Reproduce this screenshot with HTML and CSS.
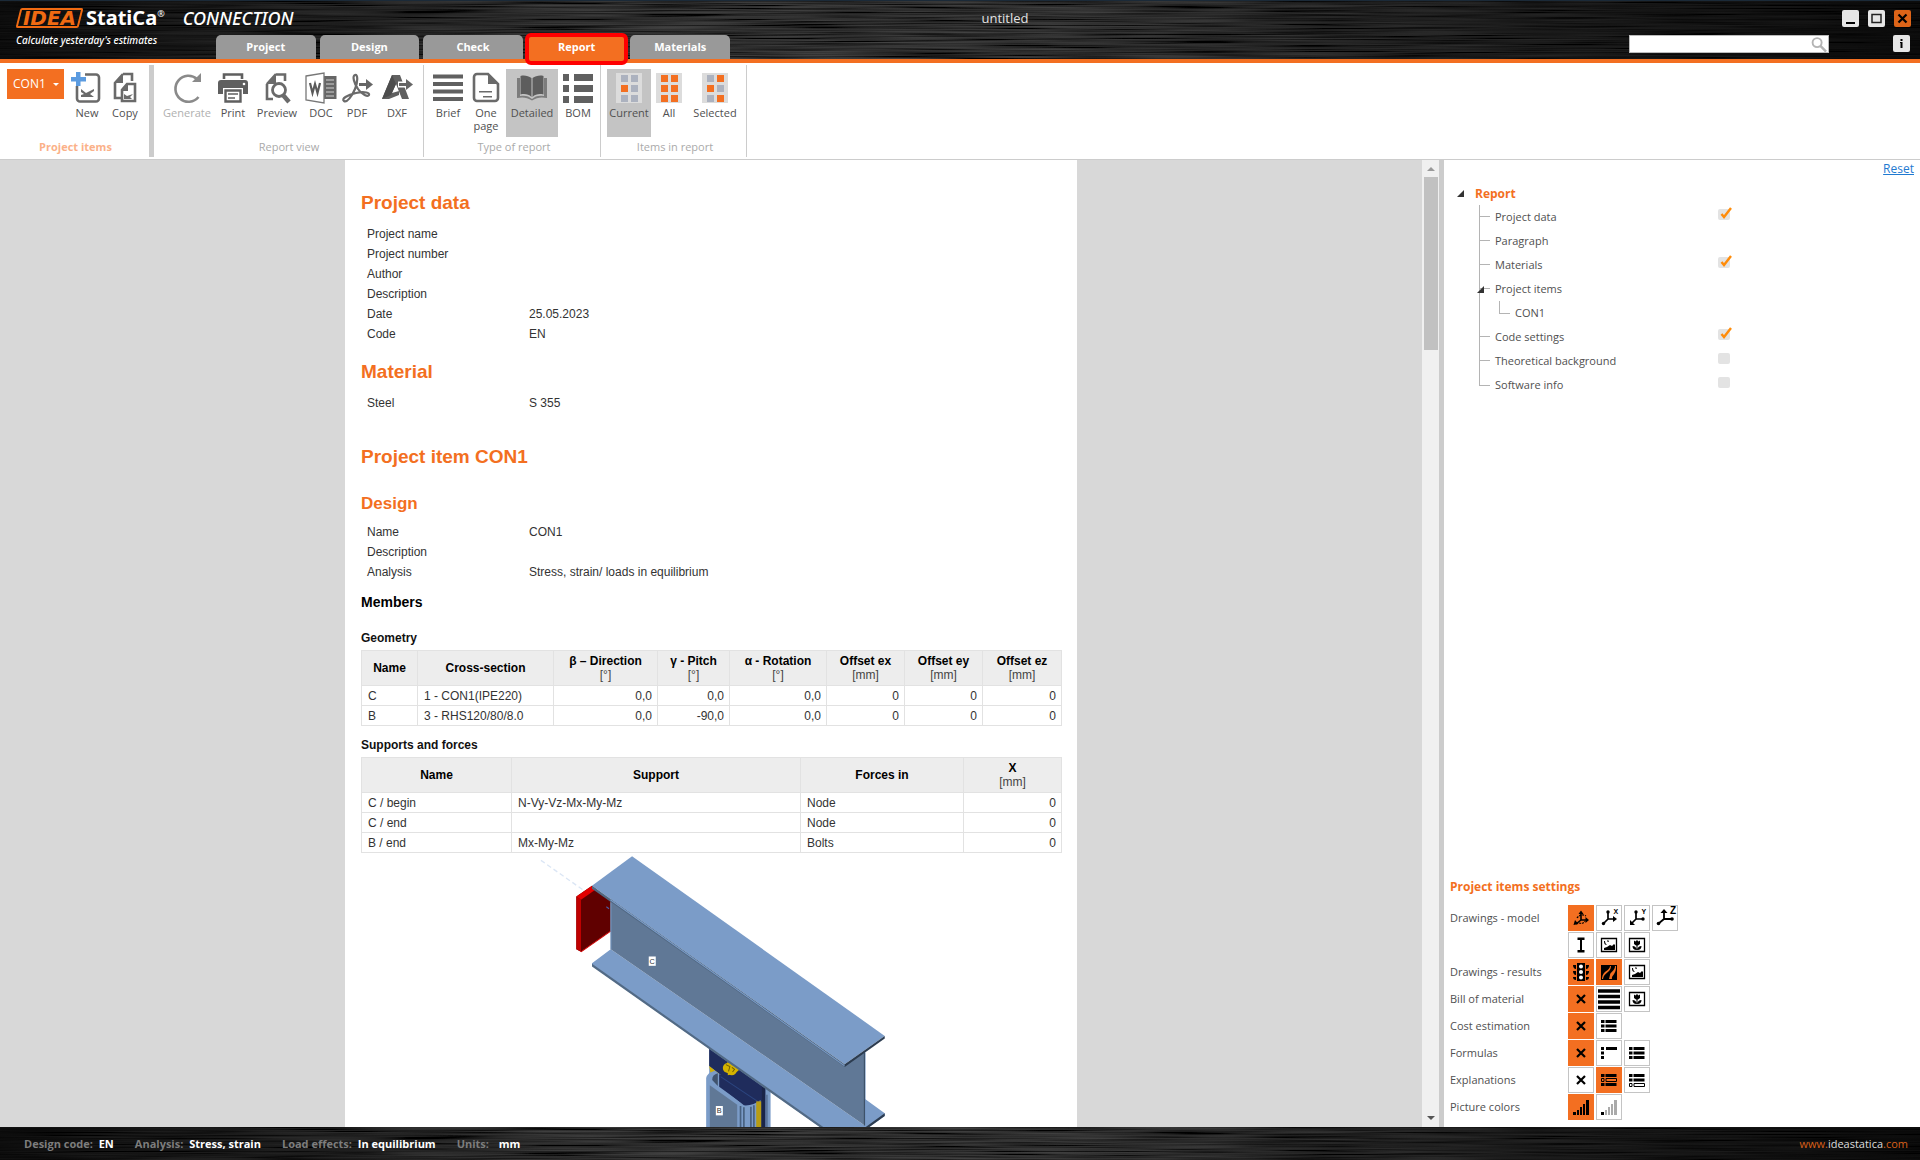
FILE: index.html
```html
<!DOCTYPE html>
<html lang="en">
<head>
<meta charset="utf-8">
<title>IDEA StatiCa Connection - untitled</title>
<link rel="stylesheet" href="styles.css">
</head>
<body>
<svg class="defs" aria-hidden="true">
  <symbol id="i-x" viewBox="0 0 24 24"><path d="M8 8l8 8M16 8l-8 8" fill="none" stroke="#000" stroke-width="2.200"/></symbol>
  <symbol id="i-list" viewBox="0 0 24 24"><path d="M4 6h3.500v3H4zM4 10.500h3.500v3H4zM4 15h3.500v3H4zM8.500 6h11v3h-11zM8.500 10.500h11v3h-11zM8.500 15h11v3h-11z"/></symbol>
  <symbol id="i-scene" viewBox="0 0 24 24"><path d="M4.500 5.500h15v13h-15z" fill="none" stroke="#000" stroke-width="1.300"/><path d="M7 17v-2l3-1 3-2 2 1 2-2 1 1v5zM7 8c0 3 1 4 3 4-1-1-2-2-2-4zM11 7l1 1.500-1 .5-1-1z"/></symbol>
  <symbol id="i-flower" viewBox="0 0 24 24"><path d="M4.500 5.500h15v13h-15z" fill="none" stroke="#000" stroke-width="1.300"/><path d="M9 7.500l1.500 1L12 7l1.500 1.500 1.500-1v3.500l-2 1.500h-2l-2-1.500zM11.500 12h1v5h-1zM7.500 13c2.500 0 4 1.500 4 4-2.500 0-4-1.500-4-4zM16.500 13c-2.500 0-4 1.500-4 4 2.500 0 4-1.500 4-4z"/></symbol>
</svg>

<header class="topbar">
  <div class="brand">
    <div class="brand-line">
      <span class="logo-idea">IDEA</span>
      <span class="logo-statica">StatiCa<sup>®</sup></span>
      <span class="logo-product">CONNECTION</span>
    </div>
    <p class="tagline">Calculate yesterday's estimates</p>
  </div>
  <div class="topbar-main">
    <div class="title-row">
      <h1 class="doc-title">untitled</h1>
      <div class="window-buttons">
        <button class="win-btn" aria-label="Minimize"><svg viewBox="0 0 17 17"><path d="M4 13h9" stroke="#000" stroke-width="2"/></svg></button>
        <button class="win-btn" aria-label="Maximize"><svg viewBox="0 0 17 17"><path d="M4 4.500h9v8H4z" fill="none" stroke="#222" stroke-width="1.500"/></svg></button>
        <button class="win-btn win-close" aria-label="Close"><svg viewBox="0 0 17 17"><path d="M4.500 4.500l8 8M12.500 4.500l-8 8" stroke="#000" stroke-width="2.200"/></svg></button>
      </div>
    </div>
    <div class="tab-row">
      <nav class="tabs">
        <button class="tab">Project</button>
        <button class="tab">Design</button>
        <button class="tab">Check</button>
        <button class="tab tab-active">Report</button>
        <button class="tab">Materials</button>
      </nav>
      <div class="tools">
        <label class="search"><input type="text" aria-label="Search"><svg viewBox="0 0 18 18"><circle cx="7" cy="7" r="4.800" fill="none" stroke="#b4b4b4" stroke-width="2"/><path d="M10.500 10.500l6 6" stroke="#b4b4b4" stroke-width="2.600"/></svg></label>
        <button class="win-btn" aria-label="Info"><svg viewBox="0 0 17 17"><path d="M7.500 4h2v2h-2zM7 7h2.500v6h-2V8H7z"/></svg></button>
      </div>
    </div>
  </div>
</header>

<section class="ribbon">
  <div class="group group-items">
    <div class="group-tools">
      <button class="item-select">CON1 <span class="caret"></span></button>
      <button class="tool w-sm"><svg viewBox="0 0 32 32"><path d="M14 2.500h11a3 3 0 0 1 3 3v21a3 3 0 0 1-3 3H9a3 3 0 0 1-3-3V14" fill="none" stroke="#6a6a6a" stroke-width="2.600"/><path d="M10 17l5 4 8-4v2l-4 3 4 3H10v-2l3-1-3-2z" fill="#6a6a6a"/><path d="M5 0h4.500v5H15v4.500H9.500V14H5V9.500H0V5h5z" fill="#5b9be0"/></svg>New</button>
      <button class="tool w-sm"><svg viewBox="0 0 32 32"><path d="M14 2h9v7M14 2L6 11v15h6" fill="none" stroke="#6a6a6a" stroke-width="2.600"/><path d="M14 2v9H5z" fill="#6a6a6a"/><path d="M18 12h8v17H13V18z" fill="#fff" stroke="#6a6a6a" stroke-width="2.600"/><path d="M19 12v7h-6zM15 22l3 2 6-2-3 3 2 2h-8z" fill="#6a6a6a"/></svg>Copy</button>
    </div>
    <p class="group-label group-label-strong">Project items</p>
  </div>
  <div class="group group-view">
    <div class="group-tools">
      <button class="tool tool-off w-xl" disabled><svg viewBox="0 0 32 32"><path d="M26 7A13 13 0 1 0 27.500 25" fill="none" stroke="#8a8a8a" stroke-width="2.600"/><path d="M30 1v9h-9z" fill="#8a8a8a"/></svg>Generate</button>
      <button class="tool w-s"><svg viewBox="0 0 32 32"><path d="M7 7V2.500h18V7" fill="none" stroke="#5f5f5f" stroke-width="2.600"/><path d="M4 8h24a3 3 0 0 1 3 3v11H1V11a3 3 0 0 1 3-3z" fill="#5f5f5f"/><path d="M6 16h20v15H6z" fill="#fff"/><path d="M8.500 18.500h15v11h-15z" fill="#fff" stroke="#5f5f5f" stroke-width="2.400"/><path d="M11 22h10M11 26h7" stroke="#5f5f5f" stroke-width="1.600"/><circle cx="27" cy="12" r="1.300" fill="#fff"/></svg>Print</button>
      <button class="tool w-l"><svg viewBox="0 0 32 32"><path d="M15 2.500h9V9M6 12v15h6M15 2L6 12" fill="none" stroke="#6a6a6a" stroke-width="2.600"/><path d="M15 2v10H5z" fill="#6a6a6a"/><circle cx="18" cy="18" r="6.500" fill="#fff" stroke="#6a6a6a" stroke-width="2.800"/><path d="M22 23l6 7" stroke="#6a6a6a" stroke-width="4.500"/></svg>Preview</button>
      <button class="tool w-s"><svg viewBox="0 0 32 32"><path d="M19 4h12.500v23H19z" fill="#666"/><path d="M21 8h8M21 12h8M21 16h8M21 20h8M21 24h8" stroke="#d0d0d0" stroke-width="1.200"/><path d="M1 4l18-3v30L1 28z" fill="#fff" stroke="#777" stroke-width="1.300"/><path d="M5 11l2.500 10L10 12l2.500 9L15 11" fill="none" stroke="#5a5a5a" stroke-width="2.200"/></svg>DOC</button>
      <button class="tool w-s"><svg viewBox="0 0 32 32"><path d="M3 29c-3-2 3-6 12-8s14 0 13 2-7 0-11-6C13 11 11 4 14 3s3 7 0 14-8 14-11 12z" fill="none" stroke="#6a6a6a" stroke-width="2.200"/><path d="M18 12.500h8" stroke="#666" stroke-width="3"/><path d="M25 7l7 5.500-7 5.500z" fill="#666"/></svg>PDF</button>
      <button class="tool w-m"><svg viewBox="0 0 32 32"><path d="M1 27L11 3h8l9 24h-7l-6-15-4 9 7-2v4L8 27z" fill="#606060"/><path d="M11 3l4 9-5 11-9 4z" fill="#4d4d4d"/><path d="M17 12.500h11" stroke="#fff" stroke-width="6"/><path d="M18 12.500h9" stroke="#666" stroke-width="3"/><path d="M25 7l7 5.500-7 5.500z" fill="#666"/></svg>DXF</button>
    </div>
    <p class="group-label">Report view</p>
  </div>
  <div class="group group-type">
    <div class="group-tools">
      <button class="tool w-s"><svg viewBox="0 0 32 32"><path d="M1 4.500h30M1 12h30M1 19.500h30M1 27h30" stroke="#606060" stroke-width="4"/></svg>Brief</button>
      <button class="tool w-sl"><svg viewBox="0 0 32 32"><path d="M18 2H7a3 3 0 0 0-3 3v21a3 3 0 0 0 3 3h18a3 3 0 0 0 3-3V12z" fill="none" stroke="#6a6a6a" stroke-width="2.600"/><path d="M18 2v10h10zM9 19h13v1.600H9zM13 24h9v1.600h-9z" fill="#6a6a6a"/></svg>One<br>page</button>
      <button class="tool tool-on w-l"><svg viewBox="0 0 32 32"><path d="M1 6h3v18c5-1 9 0 12 3 3-3 7-4 12-3V6h3v20c-5-1-10-1-15 2.500C11 25 6 25 1 26z" fill="#7c7c7c"/><path d="M4.500 4c4-1 8 0 11 2v19c-3-3-7-3.500-11-2.500zM27.500 4c-4-1-8 0-11 2v19c3-3 7-3.500 11-2.500z" fill="#5d5d5d"/></svg>Detailed</button>
      <button class="tool w-sl"><svg viewBox="0 0 32 32"><path d="M1 2h6v7H1zM1 13h6v7H1zM1 24h6v7H1zM12 2h19v7H12zM12 13h19v7H12zM12 24h19v7H12z" fill="#606060"/></svg>BOM</button>
    </div>
    <p class="group-label">Type of report</p>
  </div>
  <div class="group group-scope">
    <div class="group-tools">
      <button class="tool tool-on w-m"><svg viewBox="0 0 32 32"><path d="M3 1h26v30H3z" fill="#dcdcdc"/><path d="M8 3h7v7H8zM18 3h7v7h-7zM18 13h7v7h-7zM8 23h7v7H8zM18 23h7v7h-7z" fill="#acb2bf"/><path d="M8 13h7v7H8z" fill="#f36f21"/></svg>Current</button>
      <button class="tool w-s"><svg viewBox="0 0 32 32"><path d="M3 1h26v30H3z" fill="#dcdcdc"/><path d="M8 3h7v7H8zM18 3h7v7h-7zM8 13h7v7H8zM18 13h7v7h-7zM8 23h7v7H8zM18 23h7v7h-7z" fill="#f36f21"/></svg>All</button>
      <button class="tool w-xl"><svg viewBox="0 0 32 32"><path d="M3 1h26v30H3z" fill="#dcdcdc"/><path d="M8 3h7v7H8zM18 13h7v7h-7zM8 23h7v7H8z" fill="#acb2bf"/><path d="M18 3h7v7h-7zM8 13h7v7H8zM18 23h7v7h-7z" fill="#f36f21"/></svg>Selected</button>
    </div>
    <p class="group-label">Items in report</p>
  </div>
</section>

<main class="workspace">
  <div class="viewer">
    <article class="paper">
      <h2>Project data</h2>
      <dl class="facts">
        <dt>Project name</dt><dd></dd>
        <dt>Project number</dt><dd></dd>
        <dt>Author</dt><dd></dd>
        <dt>Description</dt><dd></dd>
        <dt>Date</dt><dd>25.05.2023</dd>
        <dt>Code</dt><dd>EN</dd>
      </dl>
      <h2 class="h-material">Material</h2>
      <dl class="facts">
        <dt>Steel</dt><dd>S 355</dd>
      </dl>
      <h2 class="h-item">Project item CON1</h2>
      <h3>Design</h3>
      <dl class="facts facts-tight">
        <dt>Name</dt><dd>CON1</dd>
        <dt>Description</dt><dd></dd>
        <dt>Analysis</dt><dd>Stress, strain/ loads in equilibrium</dd>
      </dl>
      <h4>Members</h4>
      <table class="geometry">
        <caption class="cap-first">Geometry</caption>
        <colgroup><col class="c-name"><col class="c-section"><col class="c-dir"><col class="c-pitch"><col class="c-rot"><col class="c-off"><col class="c-off"><col></colgroup>
        <thead><tr><th>Name</th><th>Cross-section</th><th>β – Direction<span>[°]</span></th><th>γ - Pitch<span>[°]</span></th><th>α - Rotation<span>[°]</span></th><th>Offset ex<span>[mm]</span></th><th>Offset ey<span>[mm]</span></th><th>Offset ez<span>[mm]</span></th></tr></thead>
        <tbody>
          <tr><td>C</td><td>1 - CON1(IPE220)</td><td class="num">0,0</td><td class="num">0,0</td><td class="num">0,0</td><td class="num">0</td><td class="num">0</td><td class="num">0</td></tr>
          <tr><td>B</td><td>3 - RHS120/80/8.0</td><td class="num">0,0</td><td class="num">-90,0</td><td class="num">0,0</td><td class="num">0</td><td class="num">0</td><td class="num">0</td></tr>
        </tbody>
      </table>
      <table class="supports">
        <caption>Supports and forces</caption>
        <colgroup><col class="c-member"><col class="c-support"><col class="c-forces"><col></colgroup>
        <thead><tr><th>Name</th><th>Support</th><th>Forces in</th><th>X<span>[mm]</span></th></tr></thead>
        <tbody>
          <tr><td>C / begin</td><td>N-Vy-Vz-Mx-My-Mz</td><td>Node</td><td class="num">0</td></tr>
          <tr><td>C / end</td><td></td><td>Node</td><td class="num">0</td></tr>
          <tr><td>B / end</td><td>Mx-My-Mz</td><td>Bolts</td><td class="num">0</td></tr>
        </tbody>
      </table>
      <svg class="model" viewBox="-507 42 2100 900" role="img" aria-label="3D view of the connection">
        <path d="M32 64L240 210" stroke="#dbe6f5" stroke-width="4" stroke-dasharray="14 9"/>
        <path d="M138 172L185 140 241 185V276L152 338 138 330z" fill="#600000"/>
        <path d="M138 172L152 182V338L138 330z" fill="#c00000"/>
        <path d="M138 172L185 140 196 151 152 182z" fill="#e30000"/>
        <path d="M152 338L241 276" stroke="#d00000" stroke-width="3"/>
        <path d="M228 203l8 6" stroke="#4a5da8" stroke-width="3"/>
        <path d="M536 624L720 750V942H536z" fill="#7b9cc8"/>
        <path d="M536 620L704 736V942H570V706L536 680z" fill="#1f2c5c"/>
        <path d="M536 680L566 704V742L545 728z" fill="#d3b000"/>
        <path d="M527 716Q530 700 553 694L566 704V738L640 798Q668 800 690 782L680 942H527z" fill="#7b9cc8"/>
        <path d="M545 722Q545 706 562 702V740z" fill="#40536d"/>
        <path d="M566 742V704L692 790 672 782Q650 800 626 786z" fill="#1f2c5c"/>
        <path d="M570 712L690 792" stroke="#2c4580" stroke-width="3"/>
        <path d="M538 738L620 796V942H538z" fill="#607896"/>
        <path d="M630 800V942M640 804V942M661 802V942M670 798V942" stroke="#486180" stroke-width="5"/>
        <path d="M677 786H692V942H677z" fill="#b89d14"/>
        <path d="M694 742H704V942H694z" fill="#1a2549"/>
        <path d="M709 766V942" stroke="#526b8e" stroke-width="4"/>
        <g fill="#d4b300"><circle cx="592" cy="686" r="15"/><circle cx="604" cy="694" r="14"/><path d="M590 668L628 690 614 702 592 708z"/></g>
        <path d="M586 676l12 6-4 14M604 684l8 6-6 8" fill="none" stroke="#735f00" stroke-width="3"/>
        <path d="M185 372L241 330 1002 858V778L1062 822V830L942 915 185 380z" fill="#7b9cc8"/>
        <path d="M185 374L942 908V916L185 382z" fill="#526a85"/>
        <path d="M942 908L1062 822V830L942 916z" fill="#2c3c50"/>
        <path d="M241 180L942 676 1002 636V858L241 330z" fill="#607896"/>
        <path d="M242 190V330M1003 640V858" stroke="#6f91bd" stroke-width="3"/>
        <path d="M1001 640V858" stroke="#35485f" stroke-width="3"/>
        <path d="M185 140L305 52 1062 590 942 675z" fill="#7b9cc8"/>
        <path d="M185 140L942 675V683L185 149z" fill="#506781"/>
        <path d="M240 182L942 680" stroke="#7b9cc8" stroke-width="3"/>
        <path d="M942 675L1062 590V598L942 683z" fill="#2c3c50"/>
        <g class="tag"><rect x="355" y="352" width="21" height="28"/><text x="365" y="374">C</text></g>
        <g class="tag"><rect x="556" y="800" width="21" height="28"/><text x="566" y="822">B</text></g>
      </svg>
    </article>
  </div>
  <div class="scrollbar" aria-hidden="true"><span class="arrow arrow-up"></span><span class="thumb"></span><span class="arrow arrow-down"></span></div>

  <aside class="side">
    <a class="reset" href="#">Reset</a>
    <div class="tree">
      <p class="tree-root"><span class="expander"></span>Report</p>
      <ul>
        <li><label for="t1">Project data</label><input type="checkbox" id="t1" checked></li>
        <li><span>Paragraph</span></li>
        <li><label for="t2">Materials</label><input type="checkbox" id="t2" checked></li>
        <li class="has-child"><span>Project items</span></li>
        <li class="child"><span>CON1</span></li>
        <li><label for="t3">Code settings</label><input type="checkbox" id="t3" checked></li>
        <li><label for="t4">Theoretical background</label><input type="checkbox" id="t4"></li>
        <li><label for="t5">Software info</label><input type="checkbox" id="t5"></li>
      </ul>
    </div>

    <section class="settings">
      <h2>Project items settings</h2>
      <div class="setting"><span>Drawings - model</span><div class="opts">
        <button class="opt on" aria-label="Axonometry"><svg viewBox="0 0 24 24"><path d="M12 14V6M12 14h6M12 14l-5 4" fill="none" stroke="#000" stroke-width="1.600"/><path d="M9.500 8L12 4.500 14.500 8zM16.500 11l3.500 3-3.500 3zM6 14l-1.500 5 5-1z"/><path d="M8 12c2-3 6-4 9-2M10 17c3 1 5 0 6-2" fill="none" stroke="#000" stroke-width="1.200" stroke-dasharray="2 1"/></svg></button>
        <button class="opt" aria-label="View X"><svg viewBox="0 0 24 24"><path d="M11 13V6M11 13h7M11 13l-5 5" fill="none" stroke="#000" stroke-width="1.700"/><path d="M16 10l4 3-4 3z"/><circle cx="11" cy="6" r="1.700"/><circle cx="6.500" cy="17.500" r="1.700"/><text x="16.500" y="8">X</text></svg></button>
        <button class="opt" aria-label="View Y"><svg viewBox="0 0 24 24"><path d="M11 13V6M11 13h7M11 13l-5 5" fill="none" stroke="#000" stroke-width="1.700"/><path d="M5 14v5h5z"/><circle cx="11" cy="6" r="1.700"/><circle cx="18" cy="13" r="1.700"/><text x="16.500" y="8">Y</text></svg></button>
        <button class="opt" aria-label="View Z"><svg viewBox="0 0 24 24"><path d="M11 13V5M11 13h8M11 13l-6 5" fill="none" stroke="#000" stroke-width="1.800"/><path d="M7.500 7L11 3l3.500 4z"/><circle cx="19" cy="13" r="1.800"/><circle cx="5.500" cy="17.500" r="1.800"/><text class="big" x="17" y="8">Z</text></svg></button>
      </div></div>
      <div class="setting"><span></span><div class="opts">
        <button class="opt" aria-label="Cross-section"><svg viewBox="0 0 24 24"><path d="M8.500 4.500h7V7H13v10h2.500v2.500h-7V17H11V7H8.500z"/></svg></button>
        <button class="opt" aria-label="Scene"><svg><use href="#i-scene"/></svg></button>
        <button class="opt" aria-label="Detail"><svg><use href="#i-flower"/></svg></button>
      </div></div>
      <div class="setting"><span>Drawings - results</span><div class="opts">
        <button class="opt on" aria-label="Overall check"><svg viewBox="0 0 24 24"><path d="M8 3h8v18H8zM4 5h3v4c-2 0-3-2-3-4zM4 11h3v4c-2 0-3-2-3-4zM4 17h3v3c-2 0-3-1-3-3zM20 5h-3v4c2 0 3-2 3-4zM20 11h-3v4c2 0 3-2 3-4zM20 17h-3v3c2 0 3-1 3-3z"/><g fill="#fff"><circle cx="12" cy="6.500" r="2"/><circle cx="12" cy="12" r="2"/><circle cx="12" cy="17.500" r="2"/></g></svg></button>
        <button class="opt on" aria-label="Strain"><svg viewBox="0 0 24 24"><path d="M4 5h16v15H4z"/><path d="M13 6c0 5-7 4-8 12v1h1c1-7 8-6 8-13zM18 6c0 5-5 6-5 9l-1 4h3c-1-3 4-5 4-11V6z" fill="#f36f21"/></svg></button>
        <button class="opt" aria-label="Scene"><svg><use href="#i-scene"/></svg></button>
      </div></div>
      <div class="setting"><span>Bill of material</span><div class="opts">
        <button class="opt on" aria-label="None"><svg><use href="#i-x"/></svg></button>
        <button class="opt" aria-label="Table"><svg viewBox="0 0 24 24"><path d="M1 4h22M1 9.500h22M1 15h22M1 20.500h22" stroke="#000" stroke-width="3.600"/></svg></button>
        <button class="opt" aria-label="Detail"><svg><use href="#i-flower"/></svg></button>
      </div></div>
      <div class="setting"><span>Cost estimation</span><div class="opts">
        <button class="opt on" aria-label="None"><svg><use href="#i-x"/></svg></button>
        <button class="opt" aria-label="List"><svg><use href="#i-list"/></svg></button>
      </div></div>
      <div class="setting"><span>Formulas</span><div class="opts">
        <button class="opt on" aria-label="None"><svg><use href="#i-x"/></svg></button>
        <button class="opt" aria-label="Short"><svg viewBox="0 0 24 24"><path d="M4 6h3v3H4zM4 10.500h3v3H4zM4 15h3v3H4zM9 6h11v3H9z"/></svg></button>
        <button class="opt" aria-label="List"><svg><use href="#i-list"/></svg></button>
      </div></div>
      <div class="setting"><span>Explanations</span><div class="opts">
        <button class="opt" aria-label="None"><svg><use href="#i-x"/></svg></button>
        <button class="opt on" aria-label="Inline"><svg viewBox="0 0 24 24"><path d="M4 6h3.500v3H4zM8.500 6h11v3h-11zM4 15h3.500v3H4zM8.500 15h11v3h-11z"/><path d="M4.500 10.500h2.500v3H4.500zM9 10.500h10.500v3H9z" fill="none" stroke="#000"/></svg></button>
        <button class="opt" aria-label="At end"><svg viewBox="0 0 24 24"><path d="M4 6h3.500v3H4zM8.500 6h11v3h-11zM4 10.500h3.500v3H4zM8.500 10.500h11v3h-11z"/><path d="M4.500 15.500h2.500v3H4.500zM9 15.500h10.500v3H9z" fill="none" stroke="#000"/></svg></button>
      </div></div>
      <div class="setting"><span>Picture colors</span><div class="opts">
        <button class="opt on" aria-label="Full colors"><svg viewBox="0 0 24 24"><path d="M4 17h3v3H4zM8 15h2v5H8zM11 12h2v8h-2zM14 9h2v11h-2zM17 5h3v15h-3z"/></svg></button>
        <button class="opt" aria-label="Gray"><svg viewBox="0 0 24 24"><path d="M4 17h3v3H4z"/><path d="M8 15h2v5H8zM11 12h2v8h-2zM14 9h2v11h-2zM17 5h3v15h-3z" fill="#aaa"/></svg></button>
      </div></div>
    </section>
  </aside>
</main>

<footer class="status">
  <p><span>Design code:</span> EN</p>
  <p><span>Analysis:</span> Stress, strain</p>
  <p><span>Load effects:</span> In equilibrium</p>
  <p class="units"><span>Units:</span> mm</p>
  <a href="#">www.<b>ideastatica</b>.com</a>
</footer>
</body>
</html>
```
FILE: styles.css
```css
:root {
  --orange: #f36f21;
  --ui: "Open Sans", "Noto Sans", sans-serif;
  --doc: "Liberation Sans", Arial, sans-serif;
}

* { box-sizing: border-box; }

body, h1, h2, h3, h4, p, ul, dl, dd { margin: 0; padding: 0; }

body {
  display: flex;
  flex-direction: column;
  height: 100vh;
  overflow: hidden;
  font: 11px/16px var(--ui);
  color: #505050;
  background: #fff;
}

button {
  border: 0;
  padding: 0;
  font: inherit;
  color: inherit;
  background: none;
}

svg { display: block; }
.defs { position: absolute; width: 0; height: 0; }

/* Brushed metal bars */
.topbar, .status {
  background:
    linear-gradient(90deg, rgba(0,0,0,.75), rgba(0,0,0,.1) 32%, rgba(0,0,0,.1) 55%, rgba(0,0,0,.8)),
    url("data:image/svg+xml,%3Csvg xmlns='http://www.w3.org/2000/svg' width='1920' height='60'%3E%3Cfilter id='f' x='0' y='0' width='100%25' height='100%25'%3E%3CfeTurbulence type='fractalNoise' baseFrequency='.008 .7' numOctaves='2' seed='4'/%3E%3CfeColorMatrix values='.12 0 0 0 -.03 .12 0 0 0 -.03 .12 0 0 0 -.03 0 0 0 0 1'/%3E%3C/filter%3E%3Crect width='1920' height='60' filter='url(%23f)'/%3E%3C/svg%3E"),
    #1a1a1a;
}

.topbar {
  display: flex;
  border-top: 1px solid #1b2a38;
  border-bottom: 4px solid var(--orange);
}

.brand {
  width: 216px;
  padding: 4px 0 0 16px;
  white-space: nowrap;
  color: #fff;
}
.brand-line { display: flex; align-items: center; height: 26px; }
.brand-line span { flex: none; }
.logo-idea {
  position: relative;
  width: 67px;
  font: italic bold 20px/20px "DejaVu Sans", sans-serif;
  text-align: center;
  color: #f06a12;
}
.logo-idea::before {
  content: "";
  position: absolute;
  inset: 0 2px;
  border: 2px solid #f06a12;
  border-radius: 2px;
  transform: skewX(-14deg);
}
.logo-statica { margin-left: 3px; font: bold 20px/26px "Noto Sans", sans-serif; }
.logo-statica sup { font: 9px/9px "Noto Sans", sans-serif; vertical-align: 8px; }
.logo-product { margin-left: 18px; font: italic 500 18px/26px "Noto Sans", sans-serif; }
.tagline { margin-top: 1px; font: italic 500 10px/16px "Noto Sans", sans-serif; }

.topbar-main { flex: 1; }
.title-row { display: flex; height: 34px; }
.doc-title {
  flex: 1;
  padding-top: 8px;
  font: 13px/18px var(--ui);
  text-align: center;
  color: #e2e2e2;
}
.window-buttons {
  display: flex;
  justify-content: flex-end;
  gap: 9px;
  width: 126px;
  padding: 9px 9px 0 0;
}
.win-btn {
  width: 17px;
  height: 17px;
  border-radius: 2px;
  background: #e6e6e6;
}
.win-close { background: #dd6418; }

.tab-row { display: flex; justify-content: space-between; }
.tabs {
  display: grid;
  grid-template-columns: repeat(5, 1fr);
  gap: 4px;
  width: 514px;
}
.tab {
  height: 24px;
  border-radius: 5px 5px 0 0;
  font-weight: bold;
  color: #fff;
  background: #999;
}
.tab-active { position: relative; background: var(--orange); }
.tab-active::after {
  content: "";
  position: absolute;
  inset: -2px -2px -6px;
  border: 4px solid #f00;
  border-radius: 6px;
}
.tools {
  display: flex;
  align-items: flex-start;
  gap: 64px;
  padding-right: 10px;
}
.search {
  display: flex;
  width: 200px;
  height: 18px;
  border: 1px solid #bbb;
  background: #fff;
}
.search input {
  flex: 1;
  min-width: 0;
  border: 0;
  padding: 0 4px;
  background: none;
}
.search svg { width: 18px; height: 17px; }

/* Ribbon */
.ribbon {
  display: flex;
  height: 97px;
  padding: 2px 0;
  border-bottom: 1px solid #ccc;
}
.group { border-right: 1px solid #ccc; }
.group-tools { display: flex; height: 74px; padding-top: 4px; }
.group-label { line-height: 16px; text-align: center; color: #aaa; }
.group-label-strong { font-weight: bold; color: #fbb189; }
.group-items { padding: 0 5px 0 7px; border-right: 5px solid #ccc; }
.group-view { padding: 0 4px 0 5px; }
.group-type { padding: 0 2px 0 6px; }
.group-scope { padding: 0 3px 0 6px; }

.item-select {
  display: flex;
  align-items: center;
  justify-content: space-between;
  width: 57px;
  height: 30px;
  margin-right: 4px;
  padding: 0 5px 0 6px;
  font-size: 12px;
  color: #fff;
  background: var(--orange);
}
.caret {
  border: 3px solid transparent;
  border-top-color: #fff;
  border-bottom: 0;
}

.tool {
  display: flex;
  flex-direction: column;
  align-items: center;
  height: 68px;
  padding-top: 3px;
  line-height: 13px;
}
.tool svg { width: 32px; height: 32px; margin-bottom: 2px; }
.tool-on { background: #c4c4c4; }
.tool-off { color: #b0b0b0; }
.w-s { width: 36px; }
.w-sm { width: 38px; }
.w-sl { width: 40px; }
.w-m { width: 44px; }
.w-l { width: 52px; }
.w-xl { width: 56px; }

/* Workspace */
.workspace { display: flex; flex: 1; min-height: 0; }
.viewer {
  flex: 1;
  overflow: hidden;
  background: #d8d8d8;
}
.paper {
  width: 732px;
  margin: 0 auto;
  padding: 31px 15px 0 16px;
  font: 12px/20px var(--doc);
  color: #333;
  background: #fff;
}
.paper h2 { font-size: 19px; line-height: 24px; color: var(--orange); }
.paper .h-material { margin-top: 16px; }
.paper .h-item { margin-top: 32px; }
.paper h3 { margin-top: 23px; font-size: 17px; line-height: 24px; color: var(--orange); }
.paper h4 { margin-top: 11px; font-size: 14px; line-height: 18px; color: #000; }
.facts {
  display: grid;
  grid-template-columns: 162px 1fr;
  grid-auto-rows: 20px;
  margin-top: 9px;
  padding-left: 6px;
}
.facts-tight { margin-top: 6px; }

.paper table {
  width: 100%;
  table-layout: fixed;
  border-collapse: collapse;
}
.paper caption {
  padding: 11px 0 4px;
  font-weight: bold;
  line-height: 16px;
  text-align: left;
  color: #111;
}
.paper .cap-first { padding-top: 19px; }
.paper th, .paper td { padding: 0 6px; border: 1px solid #e2e2e2; }
.paper th { height: 35px; line-height: 14px; color: #000; background: #ededed; }
.paper th span { display: block; font-weight: normal; color: #444; }
.paper td { height: 20px; line-height: 16px; }
.paper .num { padding-right: 5px; text-align: right; }
.c-name { width: 56px; }
.c-section { width: 136px; }
.c-dir { width: 104px; }
.c-pitch { width: 72px; }
.c-rot { width: 97px; }
.c-off { width: 78px; }
.c-member { width: 150px; }
.c-support { width: 289px; }
.c-forces { width: 163px; }

.model { width: 100%; }
.tag rect { fill: #fff; }
.tag text { font: 22px var(--doc); text-anchor: middle; fill: #333; }

.scrollbar {
  display: flex;
  flex-direction: column;
  align-items: center;
  width: 17px;
  padding: 7px 0;
  background: #f0f0f0;
}
.thumb { width: 14px; height: 173px; margin-top: 6px; background: #c1c1c1; }
.arrow { border: 4px solid transparent; }
.arrow-up { border-top: 0; border-bottom-color: #999; }
.arrow-down { margin-top: auto; border-bottom: 0; border-top-color: #555; }

.side {
  display: flex;
  flex-direction: column;
  width: 481px;
  border-left: 5px solid #ccc;
}
.reset { align-self: flex-end; margin-right: 6px; font-size: 12px; line-height: 18px; color: #1f7ad1; }

.tree { padding-left: 13px; }
.tree-root {
  display: flex;
  align-items: center;
  gap: 11px;
  height: 23px;
  margin-top: 4px;
  font-size: 12px;
  font-weight: bold;
  color: var(--orange);
}
.expander, .has-child::after {
  width: 7px;
  height: 7px;
  background: #333;
  clip-path: polygon(100% 0, 100% 100%, 0 100%);
}
.tree ul { padding-left: 22px; list-style: none; }
.tree li {
  position: relative;
  display: flex;
  align-items: center;
  width: 254px;
  height: 24px;
  padding-left: 15px;
  border-left: 1px solid #b4b4b4;
}
.tree li::before {
  content: "";
  position: absolute;
  top: 11px;
  left: 0;
  width: 10px;
  border-top: 1px solid #b4b4b4;
}
.has-child::after { content: ""; position: absolute; top: 9px; left: -3px; }
.tree .child { padding-left: 35px; }
.tree .child::before {
  top: 0;
  left: 19px;
  height: 12px;
  border: 1px solid #b4b4b4;
  border-width: 0 0 1px 1px;
}
.tree li:last-child { border-color: transparent; }
.tree li:last-child::before {
  top: 0;
  left: -1px;
  height: 12px;
  border: 1px solid #b4b4b4;
  border-width: 0 0 1px 1px;
}
.tree input {
  appearance: none;
  width: 15px;
  height: 15px;
  margin: 0 0 8px auto;
  background: url("data:image/svg+xml,%3Csvg xmlns='http://www.w3.org/2000/svg' viewBox='0 0 15 15'%3E%3Crect y='3' width='12' height='11' rx='2' fill='%23e3e3e3'/%3E%3C/svg%3E");
}
.tree input:checked {
  background-image: url("data:image/svg+xml,%3Csvg xmlns='http://www.w3.org/2000/svg' viewBox='0 0 15 15'%3E%3Crect y='3' width='12' height='11' rx='2' fill='%23e3e3e3'/%3E%3Cpath d='M3.500 8l2.500 3L13 2' fill='none' stroke='%23ff8c0a' stroke-width='2.400'/%3E%3C/svg%3E");
}

.settings { margin-top: auto; padding: 0 0 7px 6px; }
.settings h2 { margin-bottom: 8px; font-size: 12px; line-height: 18px; color: var(--orange); }
.setting {
  display: grid;
  grid-template-columns: 118px 1fr;
  align-items: center;
  height: 27px;
}
.opts { display: flex; gap: 2px; }
.opt { width: 26px; height: 26px; border: 1px solid #c4c4c4; }
.opt svg { width: 24px; height: 24px; }
.opt.on { border-color: var(--orange); background: var(--orange); }
.opt text { font: bold 7px var(--doc); }
.opt .big { font-size: 10px; }

/* Status bar */
.status {
  display: flex;
  align-items: center;
  gap: 21px;
  height: 33px;
  padding: 0 12px 0 24px;
  font-weight: bold;
  color: #fff;
}
.status span { margin-right: 3px; color: #7d7d7d; }
.status .units span { margin-right: 7px; }
.status a { margin-left: auto; font-weight: normal; text-decoration: none; color: #d9601a; }
.status b { font-weight: normal; color: #ddd; }
```
